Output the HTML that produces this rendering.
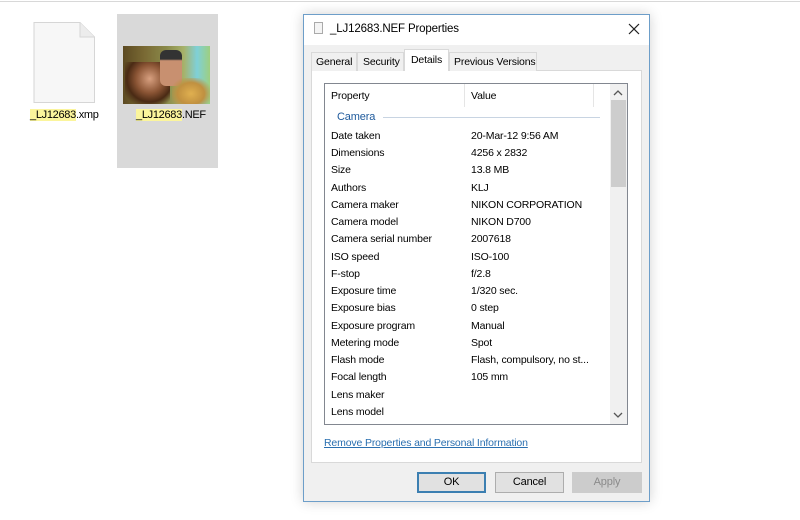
<!DOCTYPE html>
<html><head><meta charset="utf-8"><style>
*{margin:0;padding:0;box-sizing:border-box}
body{width:800px;height:520px;background:#fff;position:relative;overflow:hidden;font-family:"Liberation Sans",sans-serif;font-size:10.5px;letter-spacing:-0.15px;color:#000}
.a{position:absolute}
.t{position:absolute;white-space:nowrap;line-height:13px}
.hl{background:#fbf59c}
.btn{position:absolute;height:21px;border:1px solid #adadad;background:#e1e1e1;text-align:center;line-height:19px;font-size:11px}
</style></head><body>
<div class="a" style="left:0;top:1px;width:800px;height:1px;background:#d8d8d8"></div>
<svg class="a" style="left:33px;top:22px" width="62" height="81"><path d="M1 .5H47L61.5 15V80.5H1Z" fill="#f7f7f7" stroke="#d6d6d6"/><path d="M47 .5V15H61.5" fill="#ececec" stroke="#d6d6d6"/></svg>
<div class="t" style="left:30px;top:109px;font-size:11px;letter-spacing:-0.3px"><span class="hl">_LJ12683</span>.xmp</div>
<div class="a" style="left:117px;top:14px;width:101px;height:154px;background:#d9d9d9"></div>
<div class="a" style="left:123px;top:46px;width:87px;height:58px;background:linear-gradient(90deg,#5c4a22 0%,#7a6a34 25%,#8a8a4a 50%,#a7b26a 70%,#7fd0d8 85%,#9ecf80 100%)"></div>
<div class="a" style="left:125px;top:62px;width:45px;height:42px;background:radial-gradient(ellipse at 55% 40%,#d8a080 0%,#8a5434 40%,#4a2a14 65%,transparent 85%)"></div>
<div class="a" style="left:160px;top:50px;width:22px;height:36px;background:linear-gradient(180deg,#333 0%,#333 25%,#c89070 30%,#c89070 100%);border-radius:6px"></div>
<div class="a" style="left:172px;top:78px;width:38px;height:26px;background:radial-gradient(ellipse at 50% 60%,#e0b050 0%,#c09040 50%,transparent 80%)"></div>
<div class="t" style="left:136px;top:109px;font-size:11px;letter-spacing:-0.3px"><span class="hl">_LJ12683</span>.NEF</div>
<div class="a" style="left:303px;top:14px;width:347px;height:488px;background:#f0f0f0;border:1px solid #6d9ec9;box-shadow:0 0 12px rgba(0,0,0,.18)"></div>
<div class="a" style="left:304px;top:15px;width:345px;height:30px;background:#fff"></div>
<div class="a" style="left:314px;top:22px;width:9px;height:12px;border:1px solid #aaa;background:#f4f4f4"></div>
<div class="t" style="left:330px;top:23px;font-size:11.5px">_LJ12683.NEF Properties</div>
<svg class="a" style="left:628px;top:23px" width="12" height="12"><path d="M1 1L11 11M11 1L1 11" stroke="#222" stroke-width="1.2"/></svg>
<div class="a" style="left:311px;top:70px;width:331px;height:393px;background:#fff;border:1px solid #d9d9d9"></div>
<div class="a" style="left:311px;top:52px;width:46px;height:19px;border:1px solid #d9d9d9;border-bottom:none;background:#f0f0f0"></div>
<div class="t" style="left:316px;top:56px">General</div>
<div class="a" style="left:357px;top:52px;width:47px;height:19px;border:1px solid #d9d9d9;border-bottom:none;background:#f0f0f0"></div>
<div class="t" style="left:363px;top:56px">Security</div>
<div class="a" style="left:404px;top:49px;width:45px;height:22px;border:1px solid #d9d9d9;border-bottom:none;background:#fff"></div>
<div class="t" style="left:411px;top:54px">Details</div>
<div class="a" style="left:449px;top:52px;width:88px;height:19px;border:1px solid #d9d9d9;border-bottom:none;background:#f0f0f0"></div>
<div class="t" style="left:454px;top:56px">Previous Versions</div>
<div class="a" style="left:324px;top:83px;width:304px;height:342px;border:1px solid #828790;background:#fff"></div>
<div class="a" style="left:464px;top:84px;width:1px;height:23px;background:#e5e5e5"></div>
<div class="a" style="left:593px;top:84px;width:1px;height:23px;background:#e5e5e5"></div>
<div class="t" style="left:331px;top:90px">Property</div>
<div class="t" style="left:471px;top:90px">Value</div>
<div class="a" style="left:610px;top:84px;width:17px;height:340px;background:#f0f0f0"></div>
<div class="a" style="left:611px;top:100px;width:15px;height:87px;background:#cdcdcd"></div>
<svg class="a" style="left:613px;top:89px" width="10" height="8"><path d="M1 6L5 2L9 6" stroke="#555" stroke-width="1.3" fill="none"/></svg>
<svg class="a" style="left:613px;top:411px" width="10" height="8"><path d="M1 2L5 6L9 2" stroke="#555" stroke-width="1.3" fill="none"/></svg>
<div class="t" style="left:337px;top:111px;color:#1e5a9c;font-size:11px">Camera</div>
<div class="a" style="left:383px;top:117px;width:217px;height:1px;background:#c8d4e2"></div>
<div class="t" style="left:331px;top:130px">Date taken</div><div class="t" style="left:471px;top:130px">20-Mar-12 9:56 AM</div>
<div class="t" style="left:331px;top:147px">Dimensions</div><div class="t" style="left:471px;top:147px">4256 x 2832</div>
<div class="t" style="left:331px;top:164px">Size</div><div class="t" style="left:471px;top:164px">13.8 MB</div>
<div class="t" style="left:331px;top:182px">Authors</div><div class="t" style="left:471px;top:182px">KLJ</div>
<div class="t" style="left:331px;top:199px">Camera maker</div><div class="t" style="left:471px;top:199px">NIKON CORPORATION</div>
<div class="t" style="left:331px;top:216px">Camera model</div><div class="t" style="left:471px;top:216px">NIKON D700</div>
<div class="t" style="left:331px;top:233px">Camera serial number</div><div class="t" style="left:471px;top:233px">2007618</div>
<div class="t" style="left:331px;top:251px">ISO speed</div><div class="t" style="left:471px;top:251px">ISO-100</div>
<div class="t" style="left:331px;top:268px">F-stop</div><div class="t" style="left:471px;top:268px">f/2.8</div>
<div class="t" style="left:331px;top:285px">Exposure time</div><div class="t" style="left:471px;top:285px">1/320 sec.</div>
<div class="t" style="left:331px;top:302px">Exposure bias</div><div class="t" style="left:471px;top:302px">0 step</div>
<div class="t" style="left:331px;top:320px">Exposure program</div><div class="t" style="left:471px;top:320px">Manual</div>
<div class="t" style="left:331px;top:337px">Metering mode</div><div class="t" style="left:471px;top:337px">Spot</div>
<div class="t" style="left:331px;top:354px">Flash mode</div><div class="t" style="left:471px;top:354px">Flash, compulsory, no st...</div>
<div class="t" style="left:331px;top:371px">Focal length</div><div class="t" style="left:471px;top:371px">105 mm</div>
<div class="t" style="left:331px;top:389px">Lens maker</div>
<div class="t" style="left:331px;top:406px">Lens model</div>
<div class="t" style="left:324px;top:437px;color:#2a6fb0;text-decoration:underline">Remove Properties and Personal Information</div>
<div class="btn" style="left:417px;top:472px;width:69px;border:2px solid #3c7fb1;line-height:17px">OK</div>
<div class="btn" style="left:495px;top:472px;width:69px">Cancel</div>
<div class="btn" style="left:572px;top:472px;width:70px;border-color:#cccccc;background:#cccccc;color:#8a8a8a">Apply</div>
</body></html>
